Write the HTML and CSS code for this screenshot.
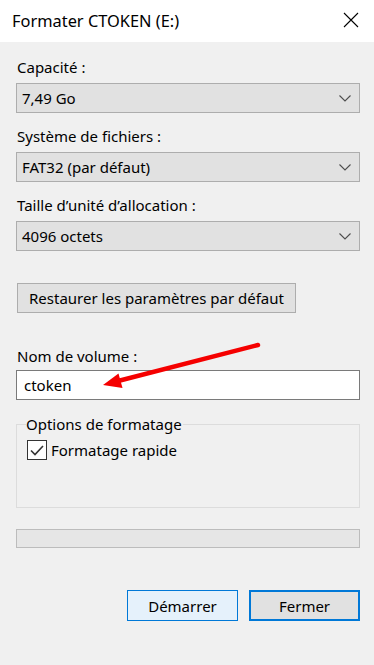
FILE: index.html
```html
<!DOCTYPE html>
<html lang="fr">
<head>
    <meta charset="UTF-8">
    <meta name="viewport" content="width=device-width, initial-scale=1.0">
    <title>Formater CTOKEN (E:)</title>
    <link rel="stylesheet" href="styles.css">
</head>
<body>
    <div class="titlebar">
        <span class="title">Formater CTOKEN (E:)</span>
        <svg class="close" width="16" height="16" viewBox="0 0 16 16">
            <path d="M1 1 L15 15 M15 1 L1 15" stroke="#000" stroke-width="1.1" fill="none"/>
        </svg>
    </div>

    <div class="dialog">
        <div class="field">
            <div class="label">Capacité :</div>
            <div class="combo">
                <span>7,49 Go</span>
                <svg class="chevron" width="12" height="7" viewBox="0 0 12 7"><path d="M0.5 0.5 L6 6 L11.5 0.5" stroke="#4d4d4d" stroke-width="1.1" fill="none"/></svg>
            </div>
        </div>
        <div class="field">
            <div class="label">Système de fichiers :</div>
            <div class="combo">
                <span>FAT32 (par défaut)</span>
                <svg class="chevron" width="12" height="7" viewBox="0 0 12 7"><path d="M0.5 0.5 L6 6 L11.5 0.5" stroke="#4d4d4d" stroke-width="1.1" fill="none"/></svg>
            </div>
        </div>
        <div class="field">
            <div class="label">Taille d’unité d’allocation :</div>
            <div class="combo">
                <span>4096 octets</span>
                <svg class="chevron" width="12" height="7" viewBox="0 0 12 7"><path d="M0.5 0.5 L6 6 L11.5 0.5" stroke="#4d4d4d" stroke-width="1.1" fill="none"/></svg>
            </div>
        </div>

        <button class="btn restore">Restaurer les paramètres par défaut</button>

        <div class="field volume">
            <div class="label">Nom de volume :</div>
            <div class="textbox">ctoken</div>
        </div>

        <fieldset class="options">
            <legend>Options de formatage</legend>
            <label class="check">
                <span class="box">
                    <svg width="14" height="11" viewBox="0 0 14 11"><path d="M1 5.5 L5 9.5 L13 1" stroke="#333" stroke-width="1.6" fill="none"/></svg>
                </span>
                Formatage rapide
            </label>
        </fieldset>

        <div class="progress"></div>

        <div class="actions">
            <button class="btn start">Démarrer</button>
            <button class="btn close-btn">Fermer</button>
        </div>
    </div>

    <!-- red annotation arrow drawn over the dialog -->
    <svg class="arrow" width="374" height="665" viewBox="0 0 374 665">
        <path d="M258 345 L118 381" stroke="#f50000" stroke-width="4.5" stroke-linecap="round" fill="none"/>
        <path d="M103 385 L118.5 373.5 L122.5 388 Z" fill="#f50000"/>
    </svg>
</body>
</html>
```

FILE: styles.css
```css
html {
    background: #f0f0f0;
}
body {
    margin: 0;
    width: 374px;
    min-height: 665px;
    font-family: "Segoe UI", "Noto Sans", Arial, sans-serif;
    font-size: 15px;
    color: #000;
    background: #f0f0f0;
    position: relative;
}
.titlebar {
    height: 42px;
    background: #fff;
    display: flex;
    align-items: center;
    justify-content: space-between;
    padding: 0 15px 0 12px;
}
.title {
    font-size: 16.4px;
    margin-top: -1px;
}
.close {
    margin-top: -2px;
}
.dialog {
    padding: 15px 14px 0 16px;
}
.field {
    margin-bottom: 13px;
}
.label {
    line-height: 20px;
    margin-bottom: 6px;
    margin-left: 1px;
}
.combo {
    height: 30px;
    box-sizing: border-box;
    border: 1px solid #adadad;
    background: #e1e1e1;
    display: flex;
    align-items: center;
    justify-content: space-between;
    padding: 0 8px 0 5px;
}
.chevron {
    margin-top: 1px;
}
.btn {
    font-family: inherit;
    font-size: 15px;
    color: #000;
    box-sizing: border-box;
    height: 31px;
    border: 1px solid #adadad;
    background: #e1e1e1;
    padding: 0;
    margin: 0;
}
.restore {
    width: 279px;
    margin: 19px 0 0 1px;
    height: 30px;
}
.volume {
    margin-top: 33px;
    margin-bottom: 0;
}
.volume .label {
    margin-bottom: 4px;
}
.textbox {
    height: 30px;
    box-sizing: border-box;
    border: 1px solid #7a7a7a;
    background: #fff;
    padding: 0 7px;
    line-height: 28px;
}
.options {
    margin: 14px 0 0;
    padding: 6px 10px 47px;
    border: 1px solid #dcdcdc;
    min-width: 0;
}
.options legend {
    padding: 0 1px 0 0;
    margin-left: -1px;
    line-height: 20px;
}
.check {
    display: flex;
    align-items: center;
    gap: 4px;
    line-height: 20px;
}
.box {
    width: 20px;
    height: 20px;
    box-sizing: border-box;
    border: 1px solid #333;
    background: #fff;
    display: flex;
    align-items: center;
    justify-content: center;
}
.progress {
    margin-top: 21px;
    height: 19px;
    box-sizing: border-box;
    border: 1px solid #bcbcbc;
    background: #e6e6e6;
}
.actions {
    display: flex;
    justify-content: flex-end;
    gap: 11px;
    margin-top: 42px;
}
.start,
.close-btn {
    width: 111px;
}
.start {
    background: #e5f1fb;
    border: 1px solid #0078d7;
}
.close-btn {
    border: 2px solid #0078d7;
}
.arrow {
    position: absolute;
    left: 0;
    top: 0;
    pointer-events: none;
}
```
